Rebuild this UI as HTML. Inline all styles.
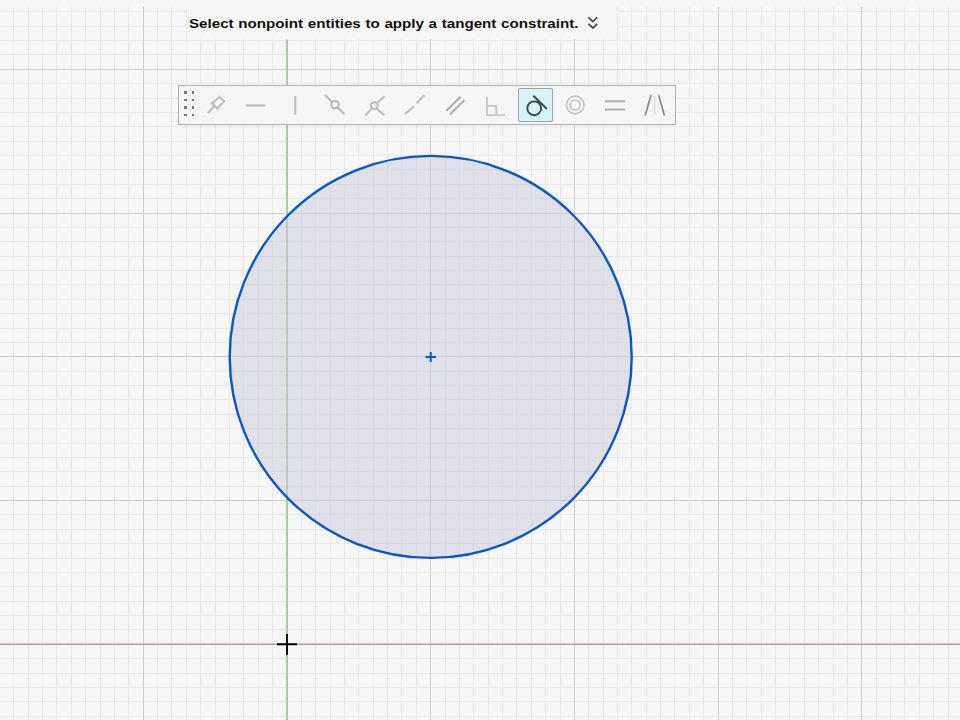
<!DOCTYPE html>
<html><head><meta charset="utf-8">
<style>
html,body{margin:0;padding:0;width:960px;height:720px;overflow:hidden;background:#f6f6f6;}
svg{position:absolute;left:0;top:0;}
#msg{position:absolute;left:187px;top:0;width:430px;height:39px;background:#f6f6f6;}
#msg span{position:absolute;left:2px;top:16px;font-family:"Liberation Sans",sans-serif;font-weight:bold;font-size:13px;word-spacing:0.4px;transform:scaleX(1.165);transform-origin:0 0;color:#111;white-space:nowrap;line-height:16px;}
#tb{position:absolute;left:178px;top:85px;width:496px;height:38px;border:1px solid #b0b0b0;background:#f5f5f5;}
</style></head><body>
<svg width="960" height="720" viewBox="0 0 960 720">
<path d="M13.5 7V720M28.5 7V720M42.5 7V720M56.5 7V720M71.5 7V720M85.5 7V720M100.5 7V720M114.5 7V720M128.5 7V720M157.5 7V720M171.5 7V720M186.5 7V720M200.5 7V720M215.5 7V720M229.5 7V720M243.5 7V720M258.5 7V720M272.5 7V720M301.5 7V720M315.5 7V720M330.5 7V720M344.5 7V720M358.5 7V720M373.5 7V720M387.5 7V720M401.5 7V720M416.5 7V720M445.5 7V720M459.5 7V720M473.5 7V720M488.5 7V720M502.5 7V720M516.5 7V720M531.5 7V720M545.5 7V720M560.5 7V720M588.5 7V720M603.5 7V720M617.5 7V720M631.5 7V720M646.5 7V720M660.5 7V720M674.5 7V720M689.5 7V720M703.5 7V720M732.5 7V720M746.5 7V720M761.5 7V720M775.5 7V720M789.5 7V720M804.5 7V720M818.5 7V720M833.5 7V720M847.5 7V720M876.5 7V720M890.5 7V720M904.5 7V720M919.5 7V720M933.5 7V720M948.5 7V720M0 11.5H960M0 26.5H960M0 40.5H960M0 54.5H960M0 83.5H960M0 98.5H960M0 112.5H960M0 126.5H960M0 141.5H960M0 155.5H960M0 169.5H960M0 184.5H960M0 198.5H960M0 227.5H960M0 241.5H960M0 256.5H960M0 270.5H960M0 284.5H960M0 299.5H960M0 313.5H960M0 328.5H960M0 342.5H960M0 371.5H960M0 385.5H960M0 399.5H960M0 414.5H960M0 428.5H960M0 443.5H960M0 457.5H960M0 471.5H960M0 486.5H960M0 514.5H960M0 529.5H960M0 543.5H960M0 558.5H960M0 572.5H960M0 586.5H960M0 601.5H960M0 615.5H960M0 629.5H960M0 658.5H960M0 673.5H960M0 687.5H960M0 701.5H960M0 716.5H960" stroke="#e9e9e9" stroke-width="1" fill="none"/>
<path d="M143.5 7V720M286.5 7V720M430.5 7V720M574.5 7V720M718.5 7V720M861.5 7V720M0 69.5H960M0 213.5H960M0 356.5H960M0 500.5H960M0 644.5H960" stroke="#cecece" stroke-width="1" fill="none"/>
<line x1="287" y1="40" x2="287" y2="720" stroke="#a6cf9e" stroke-width="2"/>
<circle cx="430.7" cy="356.9" r="201" fill="#cac9da" fill-opacity="0.5" stroke="none"/>
<line x1="0" y1="644.3" x2="960" y2="644.3" stroke="#c99494" stroke-width="1.4"/>
<circle cx="430.7" cy="356.9" r="201" fill="none" stroke="#0a56c2" stroke-width="2.4"/>
<path d="M425.6 356.9H436M430.7 352V362" stroke="#0a56c2" stroke-width="2"/>
<path d="M277 644.3H297M287 634V655" stroke="#000" stroke-width="2"/>
</svg>
<div id="msg"><span>Select nonpoint entities to apply a tangent constraint.</span>
</div>
<div id="tb"></div>
<svg width="960" height="720" viewBox="0 0 960 720">
<path d="M588.4 17.4L592.9 21.6L597.3 17.4M588.4 23.8L592.9 28L597.3 23.8" stroke="#454b50" stroke-width="1.8" fill="none"/>
<g fill="#7a7a7a">
<rect x="184" y="91" width="3" height="3"/><rect x="192" y="91" width="2" height="3"/>
<rect x="184" y="99" width="3" height="2"/><rect x="192" y="99" width="2" height="2"/>
<rect x="184" y="106" width="3" height="3"/><rect x="192" y="106" width="2" height="3"/>
<rect x="184" y="114" width="3" height="2"/><rect x="192" y="114" width="2" height="2"/>
</g>
<g stroke="#bcbcbc" stroke-width="2" fill="none" stroke-linecap="butt">
<path d="M212.43 103.73L219.57 96.59L224.24 101.25L217.10 108.40 M211.01 102.31L218.09 109.39 M214.76 106.06L207.83 112.99"/>
<path d="M245.8 105.4H265"/>
<path d="M295.3 96V114.8"/>
<g stroke="#b4b4b4"><path d="M325.1 95.1L332.3 102.1M337.6 107.2L344.4 114.1"/><circle cx="334.95" cy="104.6" r="3.7"/></g>
<path d="M365.2 115.5L371.7 108.6M377 102.9L384.5 96.2M377 108.5L384.2 115.2"/><circle cx="374.3" cy="105.7" r="3.4"/>
<path d="M405 114.3L413.8 106.3M416.3 103.2L424.4 95.1"/>
<path d="M446.3 110.8L460.6 96.8M450 114.5L464.4 100.1" stroke="#acacac"/>
<path d="M487 96.4V115.1H505M487 105.8H496.3V115" stroke="#c6c6c6" stroke-width="1.8"/>
<circle cx="575.2" cy="105" r="8.8" stroke-width="1.7" stroke="#c6c6c6"/><circle cx="575.2" cy="105" r="5" stroke-width="1.7" stroke="#c6c6c6"/>
<path d="M605 101.2H625M605 109.6H625" stroke="#b0b0b0"/>
</g>
<rect x="518.5" y="88.5" width="34" height="33" rx="1.5" fill="#d8f1fa" stroke="#a0a0a0" stroke-width="1"/>
<g stroke="#3c4246" stroke-width="2" fill="none">
<circle cx="534.2" cy="108.3" r="6.9" stroke-width="1.9"/>
<path d="M533.3 95.8L546.9 108.9"/>
</g>
<g stroke="#8a8a8a" stroke-width="1.7" fill="none">
<path d="M645.2 115.4L651 95.3M658.7 95.3L664.4 115.4"/>
</g>
<path d="M654.8 96V115" stroke="#d0d0d0" stroke-width="1"/>
</svg>
</body></html>
